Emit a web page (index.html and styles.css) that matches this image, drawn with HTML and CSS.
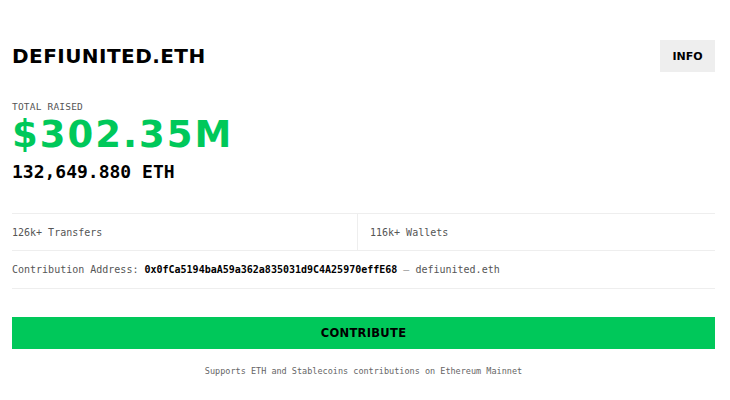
FILE: index.html
```html
<!DOCTYPE html>
<html>
<head>
<meta charset="utf-8">
<link rel="stylesheet" href="styles.css">
</head>
<body>
<div class="page">
  <header class="top">
    <h1 class="title">DEFIUNITED.ETH</h1>
    <button class="info">INFO</button>
  </header>
  <section class="raised">
    <div class="label">TOTAL RAISED</div>
    <div class="usd">$302.35M</div>
    <div class="eth">132,649.880 ETH</div>
  </section>
  <section class="stats">
    <div class="stat">126k+ Transfers</div>
    <div class="stat">116k+ Wallets</div>
  </section>
  <div class="address">Contribution Address: <b>0x0fCa5194baA59a362a835031d9C4A25970effE68</b> <span class="dash">—</span> defiunited.eth</div>
  <button class="contribute">CONTRIBUTE</button>
  <p class="note">Supports ETH and Stablecoins contributions on Ethereum Mainnet</p>
</div>
</body>
</html>
```
FILE: styles.css
```css
html, body { margin: 0; padding: 0; background: #fff; }
body { font-family: "DejaVu Sans Mono", "Liberation Mono", monospace; color: #111; }
.page { padding: 40px 15px 0 12px; display: flex; flex-direction: column; }
.top { display: flex; justify-content: space-between; align-items: center; height: 32px; }
.title { margin: 0; font-family: "DejaVu Sans", sans-serif; font-weight: 700; font-size: 20px; letter-spacing: 0.45px; color: #000; }
.info { border: 0; background: #eeeeee; width: 55px; height: 32px; font-family: "DejaVu Sans", sans-serif; font-weight: 700; font-size: 11px; color: #000; padding: 0; }
.raised { margin-top: 29px; }
.label { font-size: 9.5px; color: #555; letter-spacing: 0.2px; line-height: 12px; }
.usd { font-family: "DejaVu Sans", sans-serif; font-weight: 700; font-size: 37px; color: #00c85a; letter-spacing: 2px; line-height: 40px; margin-top: 2px; }
.eth { font-weight: 700; font-size: 18px; line-height: 24px; margin-top: 5px; color: #000; }
.stats { margin-top: 29px; display: grid; grid-template-columns: 345px 1fr; border-top: 1px solid #eee; border-bottom: 1px solid #eee; }
.stat { font-size: 10px; color: #555; height: 36px; display: flex; align-items: center; }
.stat + .stat { border-left: 1px solid #eee; padding-left: 12px; }
.address { font-size: 10px; color: #555; line-height: 37px; height: 37px; border-bottom: 1px solid #eee; white-space: nowrap; }
.address b { color: #000; font-weight: 700; }
.address .dash { color: #999; }
.contribute { margin-top: 28px; height: 32px; border: 0; background: #00c85a; font-family: "DejaVu Sans", sans-serif; font-weight: 700; font-size: 11.5px; letter-spacing: 0.3px; color: #000; }
.note { margin: 17px 0 0; text-align: center; font-size: 8.5px; color: #666; }
```
